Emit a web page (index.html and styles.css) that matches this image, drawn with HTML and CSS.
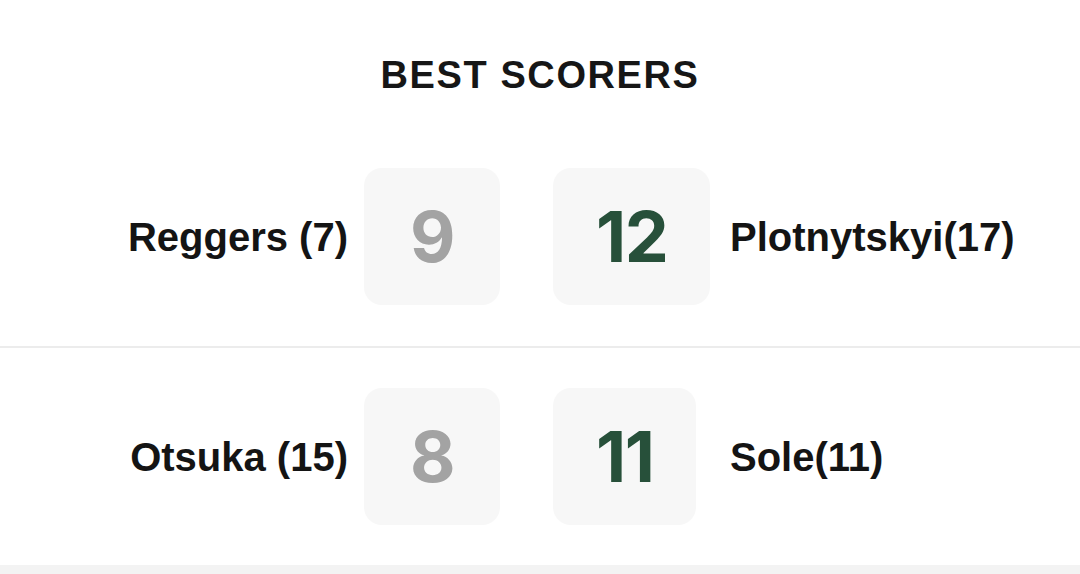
FILE: index.html
```html
<!DOCTYPE html>
<html lang="en">
<head>
<meta charset="utf-8">
<title>Best Scorers</title>
<link rel="stylesheet" href="styles.css">
</head>
<body>
<section class="scorers">
  <h2 class="title">BEST SCORERS</h2>
  <div class="row">
    <div class="side side-left">
      <span class="name">Reggers (7)</span>
      <span class="score score-home">9</span>
    </div>
    <div class="side side-right">
      <span class="score score-away">12</span>
      <span class="name">Plotnytskyi(17)</span>
    </div>
  </div>
  <div class="row row-last">
    <div class="side side-left">
      <span class="name">Otsuka (15)</span>
      <span class="score score-home">8</span>
    </div>
    <div class="side side-right">
      <span class="score score-away">11</span>
      <span class="name">Sole(11)</span>
    </div>
  </div>
</section>
<div class="footer-band"></div>
</body>
</html>
```
FILE: styles.css
```css
html, body {
  margin: 0;
  padding: 0;
  background: #ffffff;
}
body {
  font-family: "Liberation Sans", Arial, sans-serif;
  color: #151515;
  height: 574px;
  overflow: hidden;
}
.scorers {
  display: flex;
  flex-direction: column;
}
.title {
  margin: 0;
  padding-top: 53px;
  height: 74px;
  box-sizing: border-box;
  text-align: center;
  font-size: 38px;
  font-weight: 700;
  letter-spacing: 1.6px;
  line-height: 44px;
  color: #161616;
}
.row {
  display: flex;
  align-items: center;
  padding: 41px 0;
  border-bottom: 2px solid #ececec;
}
.row:first-of-type {
  padding-top: 94px;
}
.row-last {
  padding-top: 40px;
  padding-bottom: 40px;
  border-bottom: none;
}
.side {
  display: flex;
  align-items: center;
}
.side-left {
  width: 500px;
  justify-content: flex-end;
  gap: 16px;
}
.side-right {
  display: grid;
  grid-template-columns: 158px auto;
  justify-items: start;
  margin-left: 53px;
  column-gap: 19px;
}
.name {
  font-size: 40px;
  font-weight: 700;
  line-height: 48px;
  color: #141414;
}
.score {
  display: flex;
  align-items: center;
  justify-content: center;
  min-width: 136px;
  height: 137px;
  padding: 0 43px;
  box-sizing: border-box;
  border-radius: 18px;
  background: #f7f7f7;
  font-family: Inter, "Liberation Sans", sans-serif;
  font-size: 70px;
  font-weight: 700;
  letter-spacing: -1.5px;
}
.score-home {
  color: #a3a3a3;
}
.score-away {
  color: #27503a;
}
.footer-band {
  height: 9px;
  background: #f3f3f3;
  margin-top: 0;
}
```
